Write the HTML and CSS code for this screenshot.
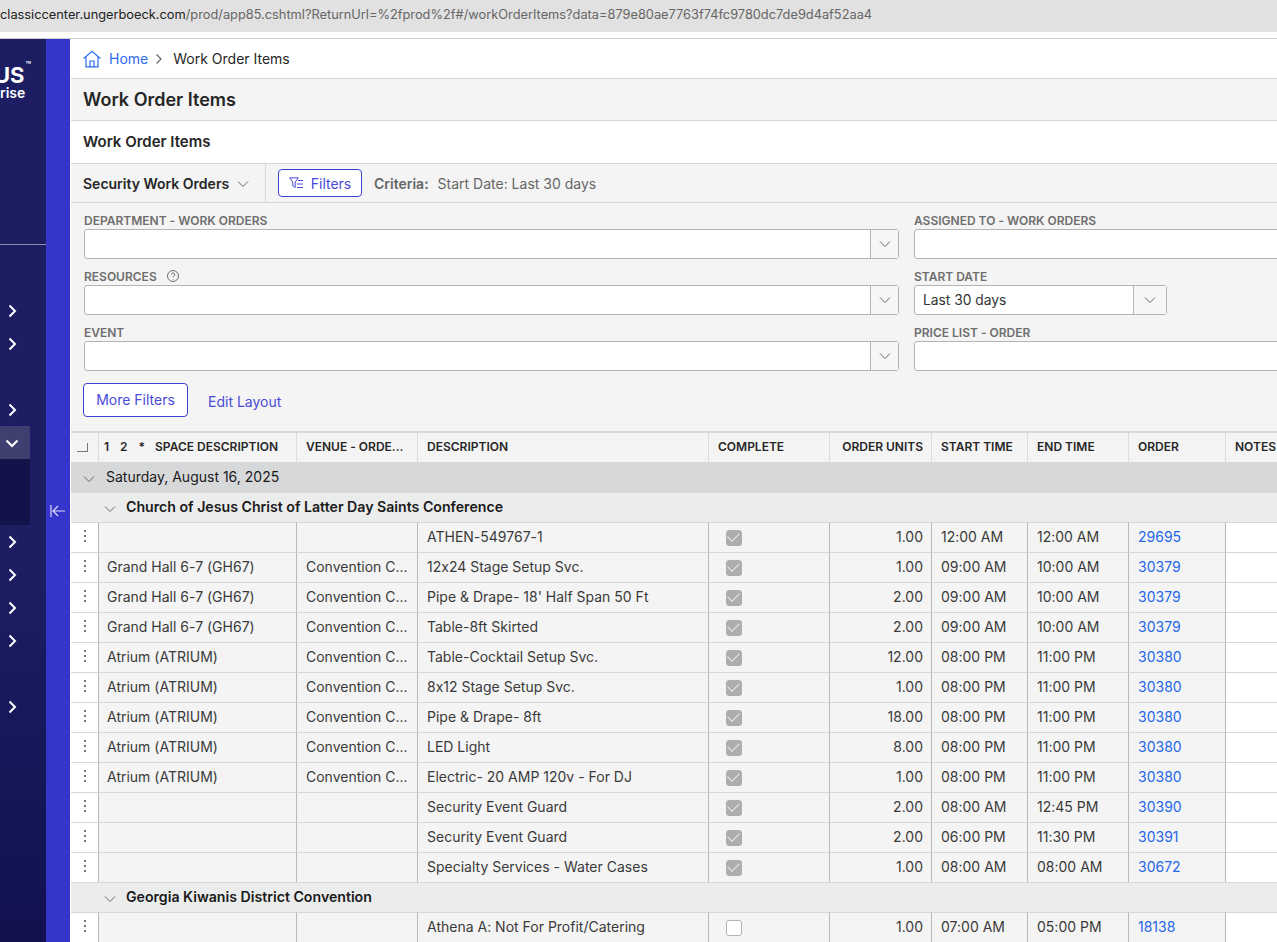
FILE: index.html
```html
<!DOCTYPE html>
<html lang="en">
<head>
  <meta charset="UTF-8">
  <meta name="viewport" content="width=device-width, initial-scale=1.0">
  <title>Work Order Items</title>
  <link rel="stylesheet" href="styles.css">
</head>
<body>
  <div class="url-bar"><span class="url-host">classiccenter.ungerboeck.com</span>/prod/app85.cshtml?ReturnUrl=%2fprod%2f#/workOrderItems?data=879e80ae7763f74fc9780dc7de9d4af52aa4</div>

  <div class="app">
    <!-- Main nav, cut off by the window edge -->
    <nav class="sidebar">
      <div class="logo">
        <div class="logo-top"><span class="logo-mark">US</span><span class="logo-tm">™</span></div>
        <div class="logo-sub">rise</div>
      </div>
      <ul class="nav">
        <li class="nav-item first"><svg class="nav-arrow" viewBox="0 0 10 14"><path d="M2.5 1.5 8 7l-5.5 5.5"/></svg></li>
        <li class="nav-item"><svg class="nav-arrow" viewBox="0 0 10 14"><path d="M2.5 1.5 8 7l-5.5 5.5"/></svg></li>
        <li class="nav-item gap"><svg class="nav-arrow" viewBox="0 0 10 14"><path d="M2.5 1.5 8 7l-5.5 5.5"/></svg></li>
        <li class="nav-item open"><svg class="nav-arrow down" viewBox="0 0 14 10"><path d="M1.5 2.5 7 8l5.5-5.5"/></svg></li>
        <li class="nav-sub"></li>
        <li class="nav-item"><svg class="nav-arrow" viewBox="0 0 10 14"><path d="M2.5 1.5 8 7l-5.5 5.5"/></svg></li>
        <li class="nav-item"><svg class="nav-arrow" viewBox="0 0 10 14"><path d="M2.5 1.5 8 7l-5.5 5.5"/></svg></li>
        <li class="nav-item"><svg class="nav-arrow" viewBox="0 0 10 14"><path d="M2.5 1.5 8 7l-5.5 5.5"/></svg></li>
        <li class="nav-item"><svg class="nav-arrow" viewBox="0 0 10 14"><path d="M2.5 1.5 8 7l-5.5 5.5"/></svg></li>
        <li class="nav-item gap"><svg class="nav-arrow" viewBox="0 0 10 14"><path d="M2.5 1.5 8 7l-5.5 5.5"/></svg></li>
      </ul>
    </nav>

    <div class="collapse-bar">
      <svg class="collapse-icon" viewBox="0 0 16 14"><path d="M1 1v12M15 7H3M8 2 3 7l5 5"/></svg>
    </div>

    <main class="content">
      <div class="breadcrumb">
        <svg class="home-icon" viewBox="0 0 18 18"><path d="M.8 8.500 9 1.200l8.200 7.300M3 7v9.800h12V7M7 16.800v-5.800h4v5.800"/></svg>
        <a class="crumb-link">Home</a>
        <svg class="crumb-sep" viewBox="0 0 8 12"><path d="M1.500 1.500 6 6l-4.500 4.500"/></svg>
        <span>Work Order Items</span>
      </div>

      <h1 class="page-title">Work Order Items</h1>
      <h2 class="section-title">Work Order Items</h2>

      <div class="toolbar">
        <div class="view-select">
          <span>Security Work Orders</span>
          <svg class="chev" viewBox="0 0 12 8"><path d="M1 1.500 6 6.500l5-5"/></svg>
        </div>
        <button class="filters-btn">
          <svg class="filter-icon" viewBox="0 0 15 12"><path d="M.7.800h8.600L6.200 5v5.500L3.800 9V5zM9 3.500h5M8 7h6M8 10.500h6"/></svg>
          Filters
        </button>
        <span class="criteria"><b>Criteria:</b> Start Date: Last 30 days</span>
      </div>

      <div class="filters">
        <div class="filter-grid">
          <div class="field">
            <label>DEPARTMENT - WORK ORDERS</label>
            <div class="combo"><div class="combo-input"></div><div class="combo-btn"><svg class="chev" viewBox="0 0 12 8"><path d="M1 1.500 6 6.500l5-5"/></svg></div></div>
          </div>
          <div class="field">
            <label>ASSIGNED TO - WORK ORDERS</label>
            <div class="combo wide"><div class="combo-input"></div></div>
          </div>
          <div class="field">
            <label>RESOURCES <svg class="help-icon" viewBox="0 0 14 14"><circle cx="7" cy="7" r="5.500"/><path d="M5.300 5.600a1.700 1.700 0 1 1 2.500 1.500c-.6.3-.8.6-.8 1.200M7 10v.6"/></svg></label>
            <div class="combo"><div class="combo-input"></div><div class="combo-btn"><svg class="chev" viewBox="0 0 12 8"><path d="M1 1.500 6 6.500l5-5"/></svg></div></div>
          </div>
          <div class="field">
            <label>START DATE</label>
            <div class="combo date"><div class="combo-input">Last 30 days</div><div class="combo-btn"><svg class="chev" viewBox="0 0 12 8"><path d="M1 1.500 6 6.500l5-5"/></svg></div></div>
          </div>
          <div class="field">
            <label>EVENT</label>
            <div class="combo"><div class="combo-input"></div><div class="combo-btn"><svg class="chev" viewBox="0 0 12 8"><path d="M1 1.500 6 6.500l5-5"/></svg></div></div>
          </div>
          <div class="field">
            <label>PRICE LIST - ORDER</label>
            <div class="combo wide"><div class="combo-input"></div></div>
          </div>
        </div>
        <div class="filter-actions">
          <button class="more-btn">More Filters</button>
          <a class="edit-link">Edit Layout</a>
        </div>
      </div>

      <table class="grid">
        <colgroup>
          <col class="c-handle"><col class="c-space"><col class="c-venue"><col class="c-desc"><col class="c-complete"><col class="c-units"><col class="c-start"><col class="c-end"><col class="c-order"><col class="c-notes">
        </colgroup>
        <thead>
          <tr>
            <th class="corner"><span class="corner-mark"></span></th>
            <th class="space-head"><span class="levels"><span>1</span><span>2</span><span>*</span></span>SPACE DESCRIPTION</th>
            <th>VENUE - ORDE...</th>
            <th>DESCRIPTION</th>
            <th>COMPLETE</th>
            <th class="num">ORDER UNITS</th>
            <th>START TIME</th>
            <th>END TIME</th>
            <th>ORDER</th>
            <th>NOTES</th>
          </tr>
        </thead>
        <tbody>
          <tr class="group-date"><td colspan="10"><svg class="chev" viewBox="0 0 12 8"><path d="M1 1.500 6 6.500l5-5"/></svg>Saturday, August 16, 2025</td></tr>
          <tr class="group-event"><td colspan="10"><svg class="chev" viewBox="0 0 12 8"><path d="M1 1.500 6 6.500l5-5"/></svg>Church of Jesus Christ of Latter Day Saints Conference</td></tr>
          <tr><td class="handle"><i></i></td><td></td><td></td><td>ATHEN-549767-1</td><td><span class="check on"></span></td><td class="num">1.00</td><td>12:00 AM</td><td>12:00 AM</td><td><a>29695</a></td><td></td></tr>
          <tr><td class="handle"><i></i></td><td>Grand Hall 6-7 (GH67)</td><td>Convention C...</td><td>12x24 Stage Setup Svc.</td><td><span class="check on"></span></td><td class="num">1.00</td><td>09:00 AM</td><td>10:00 AM</td><td><a>30379</a></td><td></td></tr>
          <tr><td class="handle"><i></i></td><td>Grand Hall 6-7 (GH67)</td><td>Convention C...</td><td>Pipe &amp; Drape- 18' Half Span 50 Ft</td><td><span class="check on"></span></td><td class="num">2.00</td><td>09:00 AM</td><td>10:00 AM</td><td><a>30379</a></td><td></td></tr>
          <tr><td class="handle"><i></i></td><td>Grand Hall 6-7 (GH67)</td><td>Convention C...</td><td>Table-8ft Skirted</td><td><span class="check on"></span></td><td class="num">2.00</td><td>09:00 AM</td><td>10:00 AM</td><td><a>30379</a></td><td></td></tr>
          <tr><td class="handle"><i></i></td><td>Atrium (ATRIUM)</td><td>Convention C...</td><td>Table-Cocktail Setup Svc.</td><td><span class="check on"></span></td><td class="num">12.00</td><td>08:00 PM</td><td>11:00 PM</td><td><a>30380</a></td><td></td></tr>
          <tr><td class="handle"><i></i></td><td>Atrium (ATRIUM)</td><td>Convention C...</td><td>8x12 Stage Setup Svc.</td><td><span class="check on"></span></td><td class="num">1.00</td><td>08:00 PM</td><td>11:00 PM</td><td><a>30380</a></td><td></td></tr>
          <tr><td class="handle"><i></i></td><td>Atrium (ATRIUM)</td><td>Convention C...</td><td>Pipe &amp; Drape- 8ft</td><td><span class="check on"></span></td><td class="num">18.00</td><td>08:00 PM</td><td>11:00 PM</td><td><a>30380</a></td><td></td></tr>
          <tr><td class="handle"><i></i></td><td>Atrium (ATRIUM)</td><td>Convention C...</td><td>LED Light</td><td><span class="check on"></span></td><td class="num">8.00</td><td>08:00 PM</td><td>11:00 PM</td><td><a>30380</a></td><td></td></tr>
          <tr><td class="handle"><i></i></td><td>Atrium (ATRIUM)</td><td>Convention C...</td><td>Electric- 20 AMP 120v - For DJ</td><td><span class="check on"></span></td><td class="num">1.00</td><td>08:00 PM</td><td>11:00 PM</td><td><a>30380</a></td><td></td></tr>
          <tr><td class="handle"><i></i></td><td></td><td></td><td>Security Event Guard</td><td><span class="check on"></span></td><td class="num">2.00</td><td>08:00 AM</td><td>12:45 PM</td><td><a>30390</a></td><td></td></tr>
          <tr><td class="handle"><i></i></td><td></td><td></td><td>Security Event Guard</td><td><span class="check on"></span></td><td class="num">2.00</td><td>06:00 PM</td><td>11:30 PM</td><td><a>30391</a></td><td></td></tr>
          <tr><td class="handle"><i></i></td><td></td><td></td><td>Specialty Services - Water Cases</td><td><span class="check on"></span></td><td class="num">1.00</td><td>08:00 AM</td><td>08:00 AM</td><td><a>30672</a></td><td></td></tr>
          <tr class="group-event"><td colspan="10"><svg class="chev" viewBox="0 0 12 8"><path d="M1 1.500 6 6.500l5-5"/></svg>Georgia Kiwanis District Convention</td></tr>
          <tr><td class="handle"><i></i></td><td></td><td></td><td>Athena A: Not For Profit/Catering</td><td><span class="check"></span></td><td class="num">1.00</td><td>07:00 AM</td><td>05:00 PM</td><td><a>18138</a></td><td></td></tr>
        </tbody>
      </table>
    </main>
  </div>
</body>
</html>
```

FILE: styles.css
```css
* {
  box-sizing: border-box;
}

html, body {
  height: 100%;
}

body {
  margin: 0;
  overflow: hidden;
  background-color: #fff;
  color: #262626;
  font-family: Inter, "Noto Sans", sans-serif;
  font-size: 14px;
  font-feature-settings: "calt" 0;
}

svg {
  display: block;
  flex: none;
  fill: none;
  stroke: currentColor;
}

.url-bar {
  height: 32px;
  padding: 7px 0 0 0;
  background-color: #e1e1e1;
  color: #666;
  font-size: 12.800px;
  line-height: 16px;
  white-space: nowrap;
  overflow: hidden;
}

.url-host {
  color: #222;
}

.app {
  display: flex;
  height: 910px;
  margin-top: 6px;
  border-top: 1px solid #cfcfcf;
}

/* Sidebar */
.sidebar {
  width: 46px;
  flex: none;
  overflow: hidden;
  background: linear-gradient(#1c1d63, #1c1d63 60%, #10114d);
  color: #fff;
}

.logo {
  height: 206px;
  padding-top: 28px;
  border-bottom: 1px solid #8d8da8;
  font-weight: 700;
  white-space: nowrap;
}

.logo-top {
  display: flex;
  align-items: flex-start;
}

.logo-mark {
  margin-left: -6px;
  font-size: 22px;
  line-height: 16px;
}

.logo-tm {
  margin: -7px 0 0 1px;
  font-size: 9px;
  line-height: 9px;
  font-weight: 600;
}

.logo-sub {
  width: 25px;
  margin-top: 3px;
  text-align: right;
  font-size: 14px;
  line-height: 14px;
  font-weight: 600;
}

.nav {
  list-style: none;
  margin: 0;
  padding: 0;
}

.nav-item {
  width: 30px;
  height: 33px;
  display: flex;
  align-items: center;
  padding-top: 1px;
}

.nav-item.first {
  margin-top: 49px;
}

.nav-item.gap {
  margin-top: 33px;
}

.nav-item.open {
  background-color: #3f406f;
  padding-top: 0;
}

.nav-arrow {
  width: 10px;
  height: 14px;
  margin-left: 7px;
  stroke-width: 2;
  stroke: #fff;
}

.nav-arrow.down {
  width: 14px;
  height: 10px;
  margin-left: 5px;
}

.nav-sub {
  width: 30px;
  height: 66px;
  background-color: #121349;
}

/* Blue collapse strip */
.collapse-bar {
  width: 24px;
  flex: none;
  background-color: #3535cb;
  padding: 465px 0 0 4px;
  color: #dcdcf8;
}

.collapse-icon {
  width: 16px;
  height: 14px;
  stroke-width: 1.200;
}

/* Main content */
.content {
  flex: 1;
  min-width: 0;
  overflow: hidden;
  margin-left: 1px;
  background-color: #f4f4f4;
}

.breadcrumb {
  height: 40px;
  display: flex;
  align-items: center;
  padding-left: 12px;
  background-color: #fff;
  border-bottom: 1px solid #d8d8d8;
  font-size: 14px;
}

.home-icon {
  width: 18px;
  height: 18px;
  color: #2d6df0;
  stroke-width: 1.200;
  margin-right: 8px;
}

.crumb-link {
  color: #2f6cf0;
}

.crumb-sep {
  width: 8px;
  height: 12px;
  margin: 0 10px 0 7px;
  color: #666;
  stroke-width: 1.200;
}

.page-title {
  margin: 0;
  height: 42px;
  padding-left: 12px;
  font-size: 18px;
  line-height: 42px;
  font-weight: 600;
  border-bottom: 1px solid #d8d8d8;
}

.section-title {
  margin: 0;
  height: 43px;
  padding-left: 12px;
  background-color: #fff;
  font-size: 15px;
  line-height: 42px;
  font-weight: 600;
  border-bottom: 1px solid #d8d8d8;
}

.toolbar {
  height: 39px;
  display: flex;
  align-items: center;
  border-bottom: 1px solid #d8d8d8;
}

.view-select {
  height: 100%;
  width: 195px;
  padding: 1px 0 0 12px;
  display: flex;
  align-items: center;
  gap: 8px;
  border-right: 1px solid #d8d8d8;
  font-size: 14px;
  font-weight: 600;
  white-space: nowrap;
}

.chev {
  width: 12px;
  height: 8px;
  color: #666;
  stroke-width: 1;
}

.filters-btn {
  margin-left: 12px;
  width: 84px;
  height: 28px;
  display: flex;
  align-items: center;
  justify-content: center;
  gap: 7px;
  padding: 0;
  background-color: #fff;
  border: 1px solid #3f3fd0;
  border-radius: 4px;
  color: #4a4ad6;
  font: inherit;
  font-size: 14px;
}

.filter-icon {
  width: 15px;
  height: 12px;
  stroke-width: 1;
}

.criteria {
  margin: 1px 0 0 12px;
  color: #666;
  font-size: 14px;
}

.criteria b {
  font-weight: 600;
  margin-right: 5px;
}

.filters {
  height: 228px;
  padding: 8px 0 0 13px;
}

.filter-grid {
  display: grid;
  grid-template-columns: 815px 1fr;
  column-gap: 15px;
  overflow: hidden;
}

.field {
  height: 56px;
  min-width: 0;
}

.field label {
  display: flex;
  align-items: center;
  gap: 9px;
  height: 18px;
  color: #6e6e6e;
  font-size: 12px;
  font-weight: 600;
  white-space: nowrap;
}

.help-icon {
  width: 14px;
  height: 14px;
  stroke-width: 1;
}

.combo {
  display: flex;
  height: 30px;
  background-color: #fff;
  border: 1px solid #b4b4b4;
  border-radius: 3px;
}

.combo.wide {
  width: 500px;
}

.combo.date {
  width: 253px;
}

.combo-input {
  flex: 1;
  padding-left: 8px;
  line-height: 28px;
  font-size: 13.800px;
  color: #333;
}

.combo-btn {
  width: 28px;
  display: flex;
  align-items: center;
  justify-content: center;
  border-left: 1px solid #b4b4b4;
  background-color: #f6f6f6;
}

.combo.date .combo-btn {
  width: 33px;
}

.filter-actions {
  display: flex;
  align-items: flex-start;
  margin: 4px 0 0 -1px;
}

.more-btn {
  width: 105px;
  height: 34px;
  padding: 0 0 2px;
  background-color: #fff;
  border: 1px solid #3f3fd0;
  border-radius: 4px;
  color: #4a4ad6;
  font: inherit;
  font-size: 14px;
}

.edit-link {
  margin: 10px 0 0 20px;
  color: #4a4ad6;
  font-size: 14px;
}

/* Results grid */
.grid {
  table-layout: fixed;
  width: 1259px;
  border-collapse: separate;
  border-spacing: 0;
  border-top: 2px solid #d8d8d8;
}

.c-handle { width: 27px; }
.c-space { width: 198px; }
.c-venue { width: 121px; }
.c-desc { width: 291px; }
.c-complete { width: 121px; }
.c-units { width: 102px; }
.c-start { width: 96px; }
.c-end { width: 101px; }
.c-order { width: 97px; }
.c-notes { width: 105px; }

.grid th {
  height: 29px;
  padding: 0 0 2px 9px;
  border-left: 1px solid #dcdcdc;
  text-align: left;
  font-size: 12px;
  font-weight: 600;
  color: #262626;
  white-space: nowrap;
  overflow: hidden;
}

.grid th.corner {
  border-left: 0;
  padding: 0;
}

.corner-mark {
  display: block;
  width: 11px;
  height: 9px;
  margin-left: 6px;
  border-right: 1px solid #777;
  border-bottom: 1px solid #777;
}

.grid th.space-head {
  padding-left: 5px;
}

.levels {
  display: inline-flex;
  gap: 11px;
  margin-right: 10px;
}

.grid th.num, .grid td.num {
  text-align: right;
  padding-right: 8px;
}

.grid td {
  height: 30px;
  padding: 0 0 2px 9px;
  border-top: 1px solid #d8d8d8;
  border-left: 1px solid #b9b9b9;
  color: #3a3a3a;
  font-size: 14px;
  white-space: nowrap;
  overflow: hidden;
}

.grid td:nth-child(2) {
  padding-left: 8px;
}

.grid td a {
  color: #2567e8;
}

.grid td.handle {
  padding: 0;
  border-left: 0;
  background-color: #fff;
}

/* three dots */
.handle i {
  display: block;
  width: 2px;
  height: 12px;
  margin: -3px 0 0 13px;
  background: repeating-linear-gradient(#777 0 2px, transparent 2px 5px);
}

.grid td:last-child {
  background-color: #fff;
}

.grid .group-date td, .grid .group-event td {
  border-left: 0;
  padding: 0 0 2px;
  line-height: 20px;
  color: #1a1a1a;
}

.grid .group-date td {
  background-color: #d7d8da;
  border-top: 0;
  padding: 0;
}

.grid .group-event td {
  background-color: #ebecec;
  font-size: 14.150px;
  font-weight: 600;
}

.group-date .chev {
  display: inline-block;
  margin: 0 11px 0 12px;
  vertical-align: -1px;
}

.group-event .chev {
  display: inline-block;
  margin: 0 10px 0 33px;
  vertical-align: -1px;
}

.check {
  display: block;
  width: 16px;
  height: 16px;
  margin: 2px 0 0 8px;
  background-color: #fff;
  border: 1px solid #b4b4b4;
  border-radius: 3px;
}

.check.on {
  position: relative;
  background-color: #adadad;
  border-color: #adadad;
}

.check.on::after {
  content: "";
  position: absolute;
  left: 3px;
  top: -1px;
  width: 6px;
  height: 10px;
  border-right: 1.500px solid #f2f2f2;
  border-bottom: 1.500px solid #f2f2f2;
  transform: rotate(45deg);
}
```
